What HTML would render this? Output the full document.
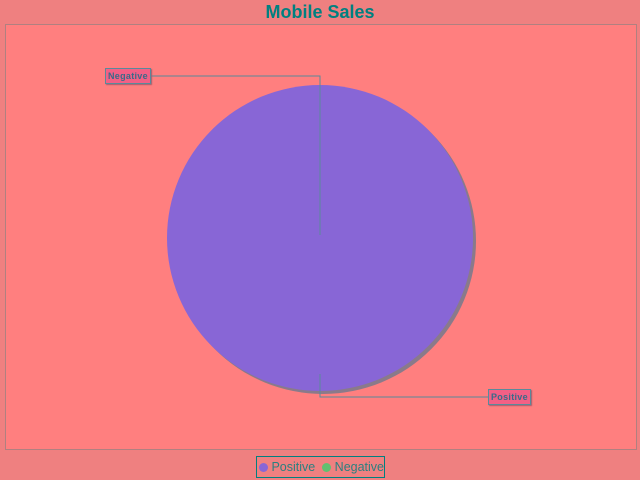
<!DOCTYPE html>
<html><head><style>
body{margin:0;width:640px;height:480px;background:#ef8080;position:relative;overflow:hidden;font-family:"Liberation Sans",sans-serif}
.t{position:absolute;top:2px;left:0;width:640px;text-align:center;font-weight:bold;font-size:18px;color:#008080}
.plot{position:absolute;left:5px;top:24px;width:630px;height:424px;background:#ff7f7f;border:1px solid #b08080}
.lab{position:absolute;font-size:9px;font-weight:bold;color:#3a6a8a;background:#f36085;border:1px solid #5a8a9a;box-shadow:1px 1px 1px #a06070;padding:2px 2px;letter-spacing:.3px}
.leg{position:absolute;left:256px;top:456px;width:129px;height:22px;border:1px solid #008080;font-size:12px;color:#2a8080;box-sizing:border-box}
.dot{display:inline-block;width:9px;height:9px;border-radius:50%;vertical-align:-1px}
</style></head><body>
<div class="t">Mobile Sales</div>
<div class="plot"></div>
<svg width="640" height="480" style="position:absolute;left:0;top:0">
<circle cx="323" cy="241" r="153" fill="#8a7a8a"/>
<circle cx="320" cy="238" r="153" fill="#8866d6"/>
<polyline points="151,76 320,76 320,235" fill="none" stroke="#5a8a9a" stroke-width="1"/>
<polyline points="320,374 320,397 488,397" fill="none" stroke="#5a8a9a" stroke-width="1"/>
</svg>
<div class="lab" style="left:105px;top:68px">Negative</div>
<div class="lab" style="left:488px;top:389px">Positive</div>
<div class="leg"><span style="position:absolute;left:2px;top:3px;font-size:12.5px"><span class="dot" style="background:#8866d6"></span> Positive &nbsp;<span class="dot" style="background:#60c070"></span> Negative</span></div>
</body></html>
